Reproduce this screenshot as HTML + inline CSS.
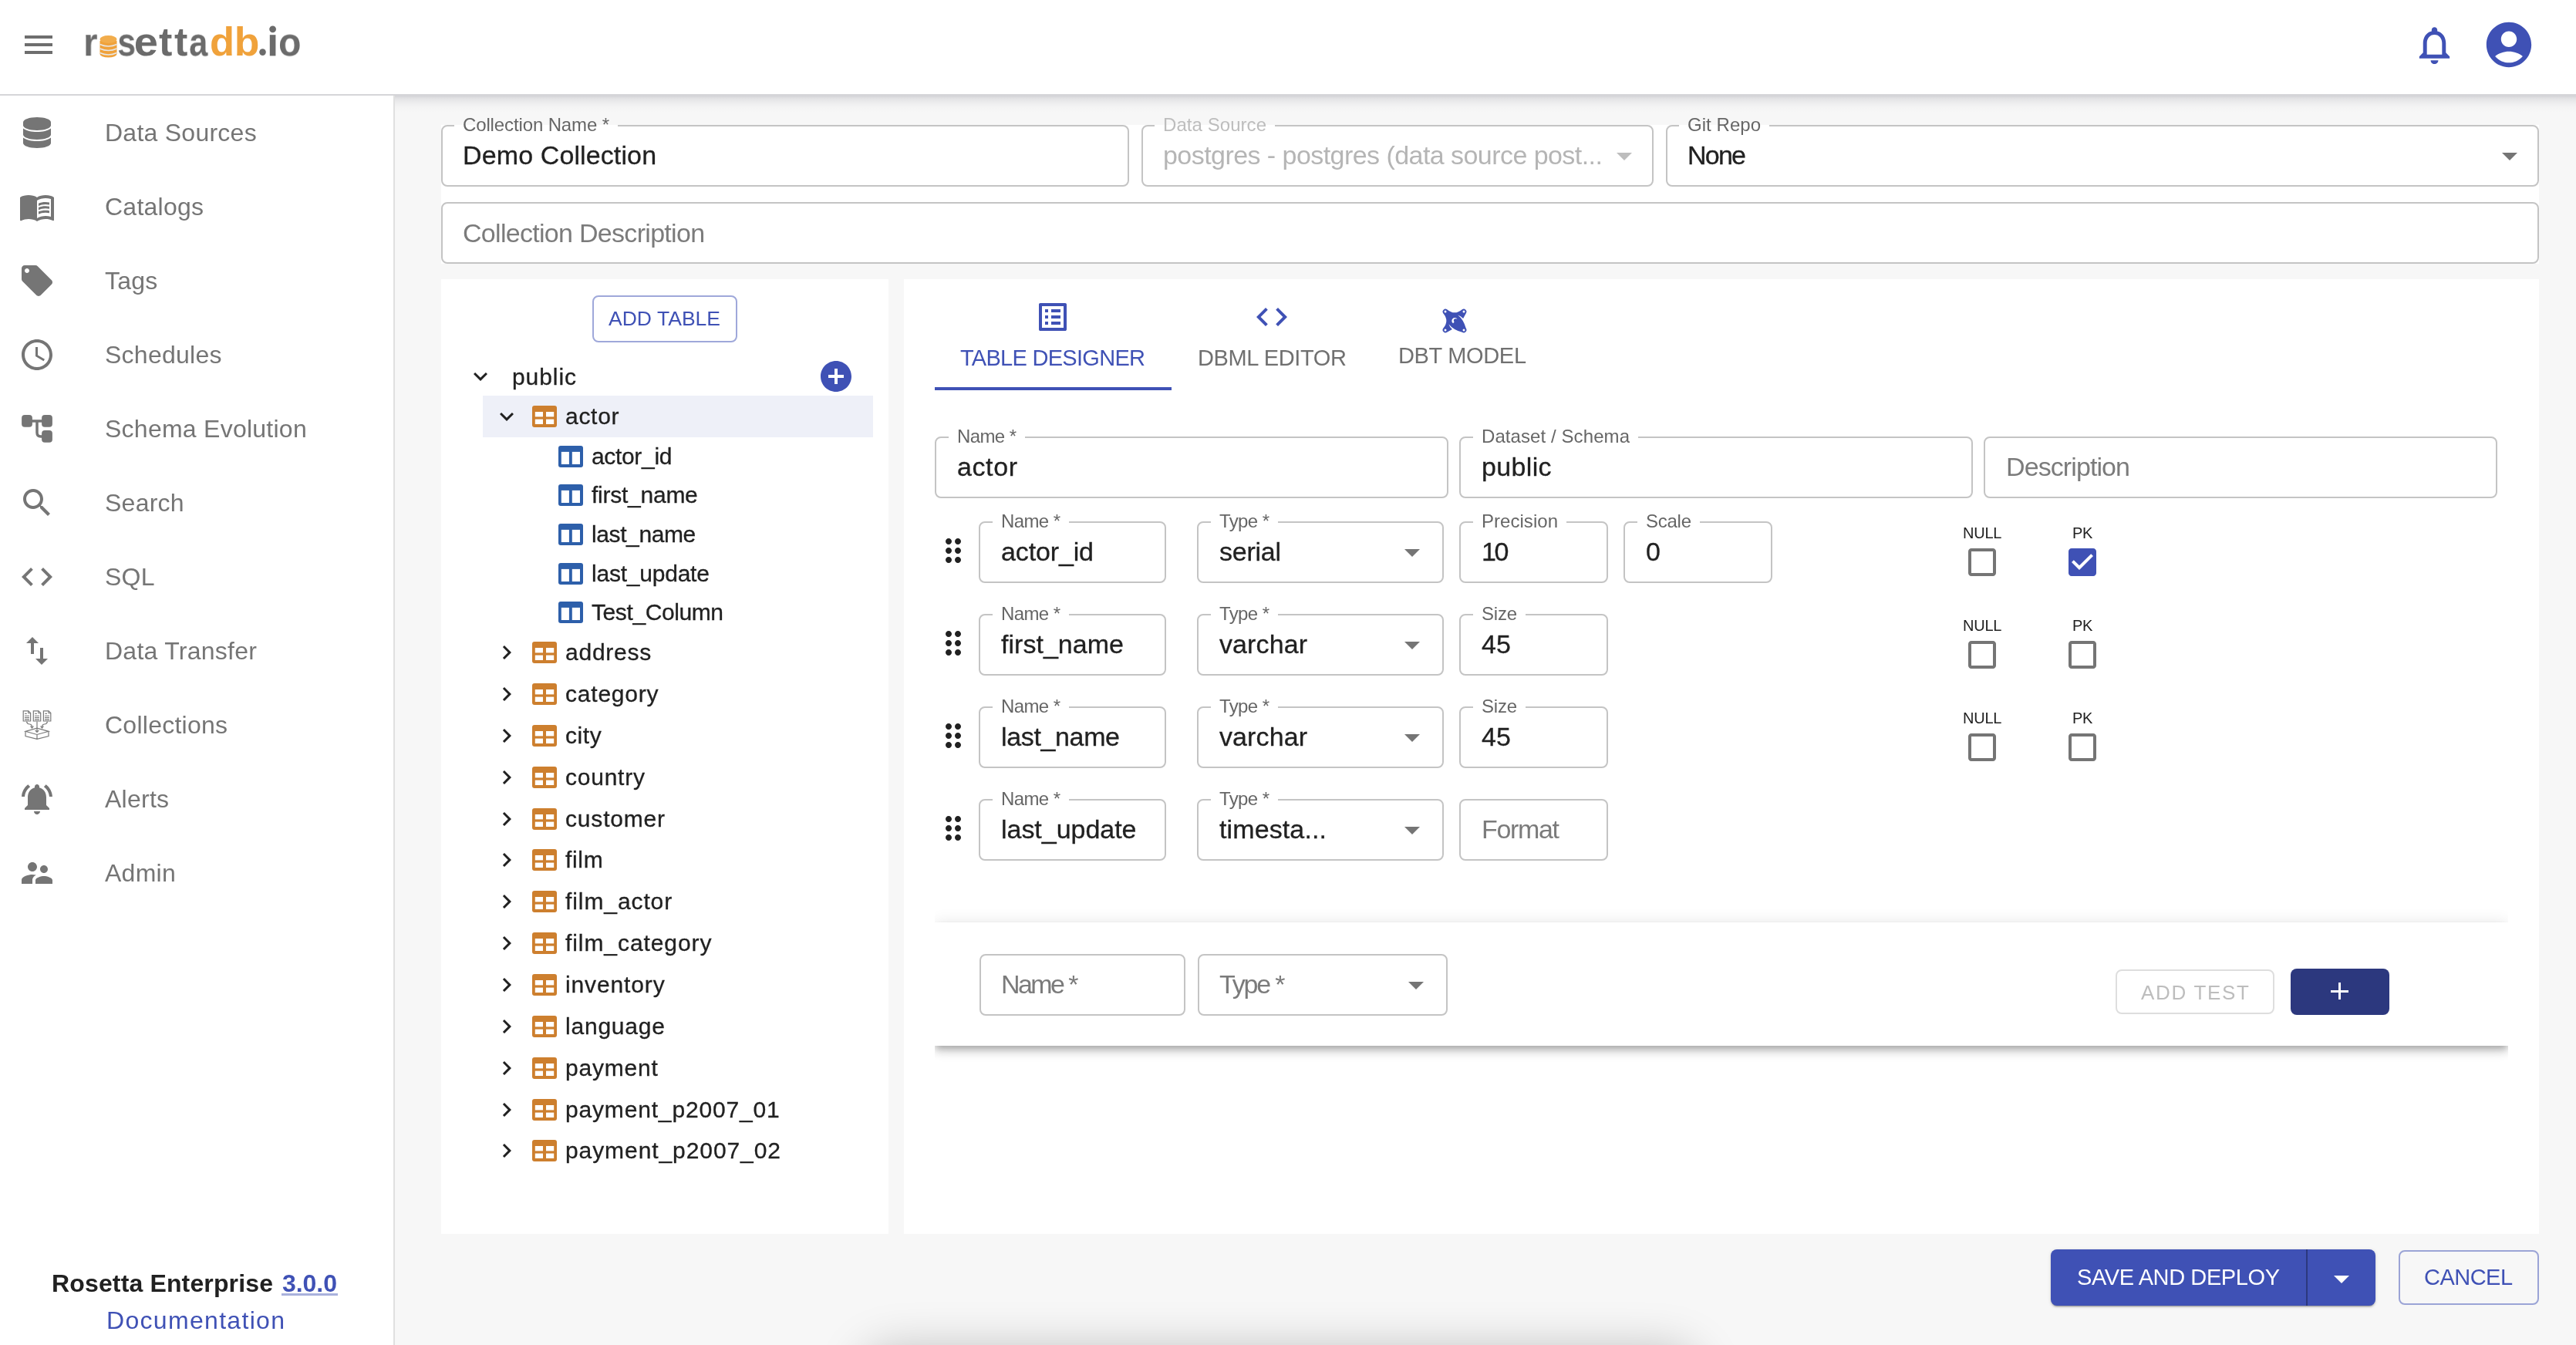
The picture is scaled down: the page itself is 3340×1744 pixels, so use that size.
<!DOCTYPE html><html><head><meta charset="utf-8"><title>Rosetta</title><style>
*{margin:0;padding:0;box-sizing:border-box}
html,body{width:3340px;height:1744px;overflow:hidden;background:#f7f7f7;font-family:"Liberation Sans",sans-serif}
.a{position:absolute}
.t{position:absolute;white-space:pre;will-change:transform}
.s{-webkit-text-stroke:0.3px currentColor}
.fld{border:2px solid #c4c4c4;border-radius:8px;background:#fff}
</style></head><body>
<div class="a" style="left:0px;top:0px;width:3340px;height:122px;background:#fff;"></div>
<div class="a" style="left:0px;top:122px;width:3340px;height:2px;background:#d5d5d8;"></div>
<div class="a" style="left:512px;top:124px;width:2828px;height:22px;background:linear-gradient(#d3d3d7,#e3e3e5 4px,#eeeeef 10px,#f4f4f4 15px,rgba(247,247,247,0));"></div>
<svg class="a" style="left:26px;top:34px;width:48px;height:48px;" viewBox="0 0 24 24"><path fill="#6e6e6e" d="M3 18h18v-2H3v2zm0-5h18v-2H3v2zm0-7v2h18V6H3z"/></svg>
<div class="t" style="left:107.9px;top:30.1px;font-size:50px;line-height:50px;font-weight:bold;color:#6b6b6b;transform:scale(0.94,1.04);transform-origin:3.1px 42.3px">r</div>
<div class="t" style="left:151.9px;top:30.1px;font-size:50px;line-height:50px;font-weight:bold;color:#6b6b6b;transform:scale(0.85,1.04);transform-origin:2.1px 42.3px">s</div>
<div class="t" style="left:174.2px;top:30.1px;font-size:50px;line-height:50px;font-weight:bold;color:#6b6b6b;transform:scale(1.12,1.04);transform-origin:2.1px 42.3px">e</div>
<div class="t" style="left:206.0px;top:30.1px;font-size:50px;line-height:50px;font-weight:bold;color:#6b6b6b;transform:scale(1.04,1.04);transform-origin:0px 42.3px">t</div>
<div class="t" style="left:225.8px;top:30.1px;font-size:50px;line-height:50px;font-weight:bold;color:#6b6b6b;transform:scale(1.04,1.04);transform-origin:0px 42.3px">t</div>
<div class="t" style="left:245.0px;top:30.1px;font-size:50px;line-height:50px;font-weight:bold;color:#6b6b6b;transform:scale(0.87,1.04);transform-origin:1px 42.3px">a</div>
<div class="t" style="left:271.9px;top:30.1px;font-size:50px;line-height:50px;font-weight:bold;color:#f0a23b;transform:scale(1.05,1.04);transform-origin:2.1px 42.3px">d</div>
<div class="t" style="left:303.6px;top:30.1px;font-size:50px;line-height:50px;font-weight:bold;color:#f0a23b;transform:scale(1.07,1.04);transform-origin:3.1px 42.3px">b</div>
<div class="t" style="left:360.9px;top:30.1px;font-size:50px;line-height:50px;font-weight:bold;color:#6b6b6b;transform:scale(0.96,1.04);transform-origin:2.1px 42.3px">o</div>
<svg class="a" style="left:129px;top:45px;width:23px;height:30px" viewBox="0 0 23 30"><ellipse cx="11.5" cy="25" rx="11" ry="4.5" fill="#f0a23b"/><rect x="0.5" y="8" width="22" height="17" fill="#f0a23b"/><ellipse cx="11.5" cy="6" rx="11" ry="5" fill="#f2ad4c"/><path d="M0.5 12.5 Q11.5 17.5 22.5 12.5" stroke="#e8e8e8" stroke-width="1.4" fill="none"/><path d="M0.5 18 Q11.5 23 22.5 18" stroke="#e8e8e8" stroke-width="1.4" fill="none"/><path d="M0.5 23.5 Q11.5 28.5 22.5 23.5" stroke="#e8e8e8" stroke-width="1.4" fill="none"/></svg>
<svg class="a" style="left:330px;top:30px;width:40px;height:50px" viewBox="0 0 40 50"><circle cx="10.5" cy="37.6" r="4.3" fill="#6b6b6b"/><rect x="19.8" y="15.2" width="7.6" height="27.2" fill="#6b6b6b"/><circle cx="23.6" cy="7.8" r="4.4" fill="#6b6b6b"/></svg>
<svg class="a" style="left:3127px;top:29px;width:59px;height:59px;" viewBox="0 0 24 24"><path fill="#3f51b5" d="M12 22c1.1 0 2-.9 2-2h-4c0 1.1.89 2 2 2zm6-6v-5c0-3.07-1.64-5.64-4.5-6.32V4c0-.83-.67-1.5-1.5-1.5s-1.5.67-1.5 1.5v.68C7.63 5.36 6 7.92 6 11v5l-2 2v1h16v-1l-2-2zm-2 1H8v-6c0-2.48 1.51-4.5 4-4.5s4 2.02 4 4.5v6z"/></svg>
<svg class="a" style="left:3218px;top:23px;width:70px;height:70px;" viewBox="0 0 24 24"><path fill="#3f51b5" d="M12 2C6.48 2 2 6.48 2 12s4.48 10 10 10 10-4.48 10-10S17.52 2 12 2zm0 4c1.93 0 3.5 1.57 3.5 3.5S13.93 13 12 13s-3.5-1.57-3.5-3.5S10.07 6 12 6zm0 14c-2.03 0-4.43-.82-6.14-2.88C7.55 15.8 9.68 15 12 15s4.45.8 6.14 2.12C16.43 19.18 14.03 20 12 20z"/></svg>
<div class="a" style="left:0px;top:124px;width:510px;height:1620px;background:#fff;"></div>
<div class="a" style="left:510px;top:124px;width:2px;height:1620px;background:#e0e0e0;"></div>
<div class="t" style="left:136.00px;top:155.91px;font-size:32px;line-height:32px;color:#757575;letter-spacing:0.250px;">Data Sources</div>
<div class="t" style="left:136.00px;top:251.91px;font-size:32px;line-height:32px;color:#757575;letter-spacing:0.250px;">Catalogs</div>
<svg class="a" style="left:24px;top:244px;width:48px;height:48px;" viewBox="0 0 24 24"><path fill="#757575" d="M21 5c-1.11-.35-2.33-.5-3.5-.5-1.95 0-4.05.4-5.5 1.5-1.45-1.1-3.55-1.5-5.5-1.5S2.45 4.9 1 6v14.65c0 .25.25.5.5.5.1 0 .15-.05.25-.05C3.1 20.45 5.05 20 6.5 20c1.95 0 4.05.4 5.5 1.5 1.35-.85 3.8-1.5 5.5-1.5 1.65 0 3.35.3 4.75 1.05.1.05.15.05.25.05.25 0 .5-.25.5-.5V6c-.6-.45-1.25-.75-2-1zm0 13.5c-1.1-.35-2.3-.5-3.5-.5-1.7 0-4.15.65-5.5 1.5V8c1.35-.85 3.8-1.5 5.5-1.5 1.2 0 2.4.15 3.5.5v11.5zM17.5 10.5c.88 0 1.73.09 2.5.26V9.24c-.79-.15-1.64-.24-2.5-.24-1.7 0-3.24.29-4.5.83v1.66c1.13-.64 2.7-.99 4.5-.99zM13 12.49v1.66c1.13-.64 2.7-.99 4.5-.99.88 0 1.73.09 2.5.26V11.9c-.79-.15-1.64-.24-2.5-.24-1.7 0-3.24.3-4.5.83zm4.5 1.84c-1.7 0-3.24.29-4.5.83v1.66c1.13-.64 2.7-.99 4.5-.99.88 0 1.73.09 2.5.26v-1.52c-.79-.16-1.64-.24-2.5-.24z"/></svg>
<div class="t" style="left:136.00px;top:347.91px;font-size:32px;line-height:32px;color:#757575;letter-spacing:0.250px;">Tags</div>
<svg class="a" style="left:24px;top:340px;width:48px;height:48px;" viewBox="0 0 24 24"><path fill="#757575" d="M21.41 11.58l-9-9C12.05 2.22 11.55 2 11 2H4c-1.1 0-2 .9-2 2v7c0 .55.22 1.05.59 1.42l9 9c.36.36.86.58 1.41.58.55 0 1.05-.22 1.41-.59l7-7c.37-.36.59-.86.59-1.41 0-.55-.23-1.06-.59-1.42zM5.5 7C4.67 7 4 6.33 4 5.5S4.67 4 5.5 4 7 4.67 7 5.5 6.33 7 5.5 7z"/></svg>
<div class="t" style="left:136.00px;top:443.91px;font-size:32px;line-height:32px;color:#757575;letter-spacing:0.250px;">Schedules</div>
<svg class="a" style="left:24px;top:436px;width:48px;height:48px;" viewBox="0 0 24 24"><path fill="#757575" d="M11.99 2C6.47 2 2 6.48 2 12s4.47 10 9.99 10C17.52 22 22 17.52 22 12S17.52 2 11.99 2zM12 20c-4.42 0-8-3.58-8-8s3.58-8 8-8 8 3.58 8 8-3.58 8-8 8zm.5-13H11v6l5.25 3.15.75-1.23-4.5-2.67z"/></svg>
<div class="t" style="left:136.00px;top:539.91px;font-size:32px;line-height:32px;color:#757575;letter-spacing:0.250px;">Schema Evolution</div>
<div class="t" style="left:136.00px;top:635.91px;font-size:32px;line-height:32px;color:#757575;letter-spacing:0.250px;">Search</div>
<svg class="a" style="left:24px;top:628px;width:48px;height:48px;" viewBox="0 0 24 24"><path fill="#757575" d="M15.5 14h-.79l-.28-.27C15.41 12.59 16 11.11 16 9.5 16 5.91 13.09 3 9.5 3S3 5.91 3 9.5 5.91 16 9.5 16c1.61 0 3.09-.59 4.23-1.57l.27.28v.79l5 4.99L20.49 19l-4.99-5zm-6 0C7.01 14 5 11.99 5 9.5S7.01 5 9.5 5 14 7.01 14 9.5 11.99 14 9.5 14z"/></svg>
<div class="t" style="left:136.00px;top:731.91px;font-size:32px;line-height:32px;color:#757575;letter-spacing:0.250px;">SQL</div>
<svg class="a" style="left:24px;top:724px;width:48px;height:48px;" viewBox="0 0 24 24"><path fill="#757575" d="M9.4 16.6L4.8 12l4.6-4.6L8 6l-6 6 6 6 1.4-1.4zm5.2 0l4.6-4.6-4.6-4.6L16 6l6 6-6 6-1.4-1.4z"/></svg>
<div class="t" style="left:136.00px;top:827.91px;font-size:32px;line-height:32px;color:#757575;letter-spacing:0.250px;">Data Transfer</div>
<svg class="a" style="left:24px;top:820px;width:48px;height:48px;" viewBox="0 0 24 24"><path fill="#757575" d="M16 17.01V10h-2v7.01h-3L15 21l4-3.99h-3zM9 3L5 6.99h3V14h2V6.99h3L9 3z"/></svg>
<div class="t" style="left:136.00px;top:923.91px;font-size:32px;line-height:32px;color:#757575;letter-spacing:0.250px;">Collections</div>
<div class="t" style="left:136.00px;top:1019.91px;font-size:32px;line-height:32px;color:#757575;letter-spacing:0.250px;">Alerts</div>
<svg class="a" style="left:24px;top:1012px;width:48px;height:48px;" viewBox="0 0 24 24"><path fill="#757575" d="M7.58 4.08L6.15 2.65C3.75 4.48 2.17 7.3 2.03 10.5h2c.15-2.65 1.51-4.97 3.55-6.42zm12.39 6.42h2c-.15-3.2-1.73-6.02-4.12-7.85l-1.42 1.43c2.02 1.45 3.39 3.77 3.54 6.42zM18 11c0-3.07-1.64-5.64-4.5-6.32V4c0-.83-.67-1.5-1.5-1.5s-1.5.67-1.5 1.5v.68C7.63 5.36 6 7.92 6 11v5l-2 2v1h16v-1l-2-2v-5zm-6 11c.14 0 .27-.01.4-.04.65-.14 1.18-.58 1.44-1.18.1-.24.15-.5.15-.78h-4c.01 1.1.9 2 2.01 2z"/></svg>
<div class="t" style="left:136.00px;top:1115.91px;font-size:32px;line-height:32px;color:#757575;letter-spacing:0.250px;">Admin</div>
<svg class="a" style="left:24px;top:1108px;width:48px;height:48px;" viewBox="0 0 24 24"><path fill="#757575" d="M16.5 12c1.38 0 2.49-1.12 2.49-2.5S17.88 7 16.5 7C15.12 7 14 8.12 14 9.5s1.12 2.5 2.5 2.5zM9 11c1.66 0 2.99-1.34 2.99-3S10.66 5 9 5C7.34 5 6 6.34 6 8s1.34 3 3 3zm7.5 3c-1.83 0-5.5.92-5.5 2.75V19h11v-2.25c0-1.83-3.67-2.75-5.5-2.75zM9 13c-2.33 0-7 1.17-7 3.5V19h7v-2.25c0-.85.33-2.34 2.37-3.47C10.5 13.1 9.66 13 9 13z"/></svg>
<svg class="a" style="left:30px;top:152px;width:36px;height:40px" viewBox="0 0 36 40"><path fill="#757575" d="M0 6.5C0 2.9 8 0 18 0s18 2.9 18 6.5v4C36 14.1 28 17 18 17S0 14.1 0 10.5z"/><path fill="#757575" d="M0 14.5C4 17.6 11 19 18 19s14-1.4 18-4.5v8C36 26.1 28 29 18 29S0 26.1 0 22.5z"/><path fill="#757575" d="M0 26.5C4 29.6 11 31 18 31s14-1.4 18-4.5v7C36 37.1 28 40 18 40S0 37.1 0 33.5z"/></svg>
<svg class="a" style="left:20px;top:530px;width:56px;height:56px" viewBox="0 0 56 56"><rect x="8.1" y="8.1" width="13.8" height="15.6" rx="4" fill="#757575"/><rect x="34.1" y="8.1" width="13.8" height="15.6" rx="4" fill="#757575"/><rect x="34.1" y="28.1" width="13.8" height="15.6" rx="4" fill="#757575"/><rect x="21" y="14.2" width="14" height="3.5" fill="#757575"/><path d="M28 16V31q0 5 5 5H35" stroke="#757575" stroke-width="3.5" fill="none"/></svg>
<svg class="a" style="left:20px;top:910px;width:56px;height:56px" viewBox="0 0 56 56" fill="none" stroke="#7a7a7a" stroke-width="1.2"><path d="M10.2 11.8h6.6l2.8 2.8v10.4h-9.4z"/><path d="M23.3 11.8h6.6l2.8 2.8v10.4h-9.4z"/><path d="M36.4 11.8h6.6l2.8 2.8v10.4h-9.4z"/><path d="M16.6 11.8v3h3M29.7 11.8v3h3M42.8 11.8v3h3" stroke-width="1"/><path d="M12.2 15.4h2.5M12 18.3h6M12 20.6h6M12 23.1h6M25.3 15.4h2.5M25 18.3h6M25 20.6h6M25 23.1h6M38.4 15.4h2.5M38 18.3h6M38 20.6h6M38 23.1h6" stroke-width="1.1"/><path d="M14.5 25.6q0.5 3 4 3.4q3.5 0.4 3 4.8M19.5 31.5l2 2.5 2-2.5"/><path d="M28 25.6V39M25.8 37l2.2 2.4 2.2-2.4"/><path d="M41.5 25.6q-0.5 3-4 3.4q-3.5 0.4-3 4.8M32.5 31.5l2 2.5 2-2.5"/><path d="M13 38.3l15-4.1 15 4.1-15 4.2z"/><path d="M13 38.3v6.2l15 3.8 15-3.8v-6.2M28 42.5v5.8"/></svg>
<div class="t" style="left:67.00px;top:1647.91px;font-size:32px;line-height:32px;color:#212121;font-weight:bold;letter-spacing:0.145px;">Rosetta Enterprise</div>
<div class="t" style="left:366.00px;top:1647.91px;font-size:32px;line-height:32px;color:#3f51b5;font-weight:bold;letter-spacing:-0.043px;">3.0.0</div>
<div class="a" style="left:365px;top:1677px;width:73px;height:3px;background:#a9b1dc;"></div>
<div class="t" style="left:137.50px;top:1695.91px;font-size:32px;line-height:32px;color:#3f51b5;letter-spacing:1.314px;">Documentation</div>
<div class="a" style="left:572px;top:162px;width:2720px;height:180px;background:#fff;"></div>
<div class="a fld" style="left:572px;top:162px;width:892px;height:80px;"></div>
<div class="a" style="left:588.5px;top:162px;width:212.0px;height:3px;background:#fff"></div>
<div class="t" style="left:599.50px;top:149.98px;font-size:24px;line-height:24px;color:#666666;letter-spacing:-0.129px;">Collection Name *</div>
<div class="t s" style="left:599.50px;top:184.22px;font-size:34px;line-height:34px;color:#212121;letter-spacing:0.114px;">Demo Collection</div>
<div class="a fld" style="left:1480px;top:162px;width:664px;height:80px;"></div>
<div class="a" style="left:1496.5px;top:162px;width:156.0px;height:3px;background:#fff"></div>
<div class="t" style="left:1507.50px;top:149.98px;font-size:24px;line-height:24px;color:#bdbdbd;letter-spacing:0.059px;">Data Source</div>
<div class="t" style="left:1507.50px;top:184.22px;font-size:34px;line-height:34px;color:#b5b5b5;letter-spacing:-0.553px;">postgres - postgres (data source post...</div>
<svg class="a" style="left:2082px;top:178px;width:48px;height:48px;" viewBox="0 0 24 24"><path fill="#bdbdbd" d="M7 10l5 5 5-5z"/></svg>
<div class="a fld" style="left:2160px;top:162px;width:1132px;height:80px;"></div>
<div class="a" style="left:2176.5px;top:162px;width:117.0px;height:3px;background:#fff"></div>
<div class="t" style="left:2187.50px;top:149.98px;font-size:24px;line-height:24px;color:#666666;letter-spacing:0.042px;">Git Repo</div>
<div class="t s" style="left:2187.50px;top:184.22px;font-size:34px;line-height:34px;color:#212121;letter-spacing:-1.755px;">None</div>
<svg class="a" style="left:3230px;top:178px;width:48px;height:48px;" viewBox="0 0 24 24"><path fill="#757575" d="M7 10l5 5 5-5z"/></svg>
<div class="a fld" style="left:572px;top:262px;width:2720px;height:80px;"></div>
<div class="t" style="left:599.50px;top:285.22px;font-size:34px;line-height:34px;color:#7b7b7b;letter-spacing:-0.703px;">Collection Description</div>
<div class="a" style="left:572px;top:362px;width:580px;height:1238px;background:#fff;"></div>
<div class="a" style="left:768px;top:383px;width:188px;height:61px;border:2px solid rgba(63,81,181,0.5);border-radius:8px"></div>
<div class="t" style="left:788.80px;top:399.57px;font-size:26.5px;line-height:26.5px;color:#3f51b5;letter-spacing:0.025px;">ADD TABLE</div>
<svg class="a" style="left:605px;top:470px;width:36px;height:36px;" viewBox="0 0 24 24"><path fill="#212121" d="M16.59 8.59L12 13.17 7.41 8.59 6 10l6 6 6-6z"/></svg>
<div class="t s" style="left:664.00px;top:473.61px;font-size:30px;line-height:30px;color:#212121;letter-spacing:0.919px;">public</div>
<svg class="a" style="left:1060px;top:464px;width:48px;height:48px;" viewBox="0 0 24 24"><path fill="#3f51b5" d="M12 2C6.48 2 2 6.48 2 12s4.48 10 10 10 10-4.48 10-10S17.52 2 12 2zm5 11h-4v4h-2v-4H7v-2h4V7h2v4h4v2z"/></svg>
<div class="a" style="left:626px;top:513px;width:506px;height:54px;background:#eef0f8;"></div>
<svg class="a" style="left:639px;top:522px;width:36px;height:36px;" viewBox="0 0 24 24"><path fill="#212121" d="M16.59 8.59L12 13.17 7.41 8.59 6 10l6 6 6-6z"/></svg>
<svg class="a" style="left:690px;top:526px;width:32px;height:28px" viewBox="0 0 32 28"><rect x="0" y="0" width="32" height="28" rx="3" fill="#cd7f2e"/><rect x="3.8" y="8" width="10.2" height="6.4" fill="#fff"/><rect x="18" y="8" width="10.2" height="6.4" fill="#fff"/><rect x="3.8" y="17.6" width="10.2" height="6.4" fill="#fff"/><rect x="18" y="17.6" width="10.2" height="6.4" fill="#fff"/></svg>
<div class="t s" style="left:733.00px;top:524.61px;font-size:30px;line-height:30px;color:#212121;letter-spacing:0.703px;">actor</div>
<svg class="a" style="left:724px;top:578px;width:32px;height:28px" viewBox="0 0 32 28"><rect x="0" y="0" width="32" height="28" rx="3" fill="#2d5faa"/><rect x="3.8" y="7.9" width="10.1" height="16.1" fill="#fff"/><rect x="17.8" y="7.9" width="10.2" height="16.1" fill="#fff"/></svg>
<div class="t s" style="left:767.00px;top:576.61px;font-size:30px;line-height:30px;color:#212121;letter-spacing:-0.333px;">actor_id</div>
<svg class="a" style="left:724px;top:628px;width:32px;height:28px" viewBox="0 0 32 28"><rect x="0" y="0" width="32" height="28" rx="3" fill="#2d5faa"/><rect x="3.8" y="7.9" width="10.1" height="16.1" fill="#fff"/><rect x="17.8" y="7.9" width="10.2" height="16.1" fill="#fff"/></svg>
<div class="t s" style="left:767.00px;top:626.61px;font-size:30px;line-height:30px;color:#212121;letter-spacing:-0.250px;">first_name</div>
<svg class="a" style="left:724px;top:679px;width:32px;height:28px" viewBox="0 0 32 28"><rect x="0" y="0" width="32" height="28" rx="3" fill="#2d5faa"/><rect x="3.8" y="7.9" width="10.1" height="16.1" fill="#fff"/><rect x="17.8" y="7.9" width="10.2" height="16.1" fill="#fff"/></svg>
<div class="t s" style="left:767.00px;top:677.61px;font-size:30px;line-height:30px;color:#212121;letter-spacing:-0.390px;">last_name</div>
<svg class="a" style="left:724px;top:730px;width:32px;height:28px" viewBox="0 0 32 28"><rect x="0" y="0" width="32" height="28" rx="3" fill="#2d5faa"/><rect x="3.8" y="7.9" width="10.1" height="16.1" fill="#fff"/><rect x="17.8" y="7.9" width="10.2" height="16.1" fill="#fff"/></svg>
<div class="t s" style="left:767.00px;top:728.61px;font-size:30px;line-height:30px;color:#212121;letter-spacing:-0.224px;">last_update</div>
<svg class="a" style="left:724px;top:780px;width:32px;height:28px" viewBox="0 0 32 28"><rect x="0" y="0" width="32" height="28" rx="3" fill="#2d5faa"/><rect x="3.8" y="7.9" width="10.1" height="16.1" fill="#fff"/><rect x="17.8" y="7.9" width="10.2" height="16.1" fill="#fff"/></svg>
<div class="t s" style="left:767.00px;top:778.61px;font-size:30px;line-height:30px;color:#212121;letter-spacing:-0.409px;">Test_Column</div>
<svg class="a" style="left:639px;top:828px;width:36px;height:36px;" viewBox="0 0 24 24"><path fill="#212121" d="M10 6L8.59 7.41 13.17 12l-4.58 4.59L10 18l6-6z"/></svg>
<svg class="a" style="left:690px;top:832px;width:32px;height:28px" viewBox="0 0 32 28"><rect x="0" y="0" width="32" height="28" rx="3" fill="#cd7f2e"/><rect x="3.8" y="8" width="10.2" height="6.4" fill="#fff"/><rect x="18" y="8" width="10.2" height="6.4" fill="#fff"/><rect x="3.8" y="17.6" width="10.2" height="6.4" fill="#fff"/><rect x="18" y="17.6" width="10.2" height="6.4" fill="#fff"/></svg>
<div class="t s" style="left:733.00px;top:830.61px;font-size:30px;line-height:30px;color:#212121;letter-spacing:0.761px;">address</div>
<svg class="a" style="left:639px;top:882px;width:36px;height:36px;" viewBox="0 0 24 24"><path fill="#212121" d="M10 6L8.59 7.41 13.17 12l-4.58 4.59L10 18l6-6z"/></svg>
<svg class="a" style="left:690px;top:886px;width:32px;height:28px" viewBox="0 0 32 28"><rect x="0" y="0" width="32" height="28" rx="3" fill="#cd7f2e"/><rect x="3.8" y="8" width="10.2" height="6.4" fill="#fff"/><rect x="18" y="8" width="10.2" height="6.4" fill="#fff"/><rect x="3.8" y="17.6" width="10.2" height="6.4" fill="#fff"/><rect x="18" y="17.6" width="10.2" height="6.4" fill="#fff"/></svg>
<div class="t s" style="left:733.00px;top:884.61px;font-size:30px;line-height:30px;color:#212121;letter-spacing:0.791px;">category</div>
<svg class="a" style="left:639px;top:936px;width:36px;height:36px;" viewBox="0 0 24 24"><path fill="#212121" d="M10 6L8.59 7.41 13.17 12l-4.58 4.59L10 18l6-6z"/></svg>
<svg class="a" style="left:690px;top:940px;width:32px;height:28px" viewBox="0 0 32 28"><rect x="0" y="0" width="32" height="28" rx="3" fill="#cd7f2e"/><rect x="3.8" y="8" width="10.2" height="6.4" fill="#fff"/><rect x="18" y="8" width="10.2" height="6.4" fill="#fff"/><rect x="3.8" y="17.6" width="10.2" height="6.4" fill="#fff"/><rect x="18" y="17.6" width="10.2" height="6.4" fill="#fff"/></svg>
<div class="t s" style="left:733.00px;top:938.61px;font-size:30px;line-height:30px;color:#212121;letter-spacing:0.567px;">city</div>
<svg class="a" style="left:639px;top:990px;width:36px;height:36px;" viewBox="0 0 24 24"><path fill="#212121" d="M10 6L8.59 7.41 13.17 12l-4.58 4.59L10 18l6-6z"/></svg>
<svg class="a" style="left:690px;top:994px;width:32px;height:28px" viewBox="0 0 32 28"><rect x="0" y="0" width="32" height="28" rx="3" fill="#cd7f2e"/><rect x="3.8" y="8" width="10.2" height="6.4" fill="#fff"/><rect x="18" y="8" width="10.2" height="6.4" fill="#fff"/><rect x="3.8" y="17.6" width="10.2" height="6.4" fill="#fff"/><rect x="18" y="17.6" width="10.2" height="6.4" fill="#fff"/></svg>
<div class="t s" style="left:733.00px;top:992.61px;font-size:30px;line-height:30px;color:#212121;letter-spacing:0.754px;">country</div>
<svg class="a" style="left:639px;top:1044px;width:36px;height:36px;" viewBox="0 0 24 24"><path fill="#212121" d="M10 6L8.59 7.41 13.17 12l-4.58 4.59L10 18l6-6z"/></svg>
<svg class="a" style="left:690px;top:1048px;width:32px;height:28px" viewBox="0 0 32 28"><rect x="0" y="0" width="32" height="28" rx="3" fill="#cd7f2e"/><rect x="3.8" y="8" width="10.2" height="6.4" fill="#fff"/><rect x="18" y="8" width="10.2" height="6.4" fill="#fff"/><rect x="3.8" y="17.6" width="10.2" height="6.4" fill="#fff"/><rect x="18" y="17.6" width="10.2" height="6.4" fill="#fff"/></svg>
<div class="t s" style="left:733.00px;top:1046.61px;font-size:30px;line-height:30px;color:#212121;letter-spacing:0.820px;">customer</div>
<svg class="a" style="left:639px;top:1097px;width:36px;height:36px;" viewBox="0 0 24 24"><path fill="#212121" d="M10 6L8.59 7.41 13.17 12l-4.58 4.59L10 18l6-6z"/></svg>
<svg class="a" style="left:690px;top:1101px;width:32px;height:28px" viewBox="0 0 32 28"><rect x="0" y="0" width="32" height="28" rx="3" fill="#cd7f2e"/><rect x="3.8" y="8" width="10.2" height="6.4" fill="#fff"/><rect x="18" y="8" width="10.2" height="6.4" fill="#fff"/><rect x="3.8" y="17.6" width="10.2" height="6.4" fill="#fff"/><rect x="18" y="17.6" width="10.2" height="6.4" fill="#fff"/></svg>
<div class="t s" style="left:733.00px;top:1099.61px;font-size:30px;line-height:30px;color:#212121;letter-spacing:0.681px;">film</div>
<svg class="a" style="left:639px;top:1151px;width:36px;height:36px;" viewBox="0 0 24 24"><path fill="#212121" d="M10 6L8.59 7.41 13.17 12l-4.58 4.59L10 18l6-6z"/></svg>
<svg class="a" style="left:690px;top:1155px;width:32px;height:28px" viewBox="0 0 32 28"><rect x="0" y="0" width="32" height="28" rx="3" fill="#cd7f2e"/><rect x="3.8" y="8" width="10.2" height="6.4" fill="#fff"/><rect x="18" y="8" width="10.2" height="6.4" fill="#fff"/><rect x="3.8" y="17.6" width="10.2" height="6.4" fill="#fff"/><rect x="18" y="17.6" width="10.2" height="6.4" fill="#fff"/></svg>
<div class="t s" style="left:733.00px;top:1153.61px;font-size:30px;line-height:30px;color:#212121;letter-spacing:0.908px;">film_actor</div>
<svg class="a" style="left:639px;top:1205px;width:36px;height:36px;" viewBox="0 0 24 24"><path fill="#212121" d="M10 6L8.59 7.41 13.17 12l-4.58 4.59L10 18l6-6z"/></svg>
<svg class="a" style="left:690px;top:1209px;width:32px;height:28px" viewBox="0 0 32 28"><rect x="0" y="0" width="32" height="28" rx="3" fill="#cd7f2e"/><rect x="3.8" y="8" width="10.2" height="6.4" fill="#fff"/><rect x="18" y="8" width="10.2" height="6.4" fill="#fff"/><rect x="3.8" y="17.6" width="10.2" height="6.4" fill="#fff"/><rect x="18" y="17.6" width="10.2" height="6.4" fill="#fff"/></svg>
<div class="t s" style="left:733.00px;top:1207.61px;font-size:30px;line-height:30px;color:#212121;letter-spacing:0.924px;">film_category</div>
<svg class="a" style="left:639px;top:1259px;width:36px;height:36px;" viewBox="0 0 24 24"><path fill="#212121" d="M10 6L8.59 7.41 13.17 12l-4.58 4.59L10 18l6-6z"/></svg>
<svg class="a" style="left:690px;top:1263px;width:32px;height:28px" viewBox="0 0 32 28"><rect x="0" y="0" width="32" height="28" rx="3" fill="#cd7f2e"/><rect x="3.8" y="8" width="10.2" height="6.4" fill="#fff"/><rect x="18" y="8" width="10.2" height="6.4" fill="#fff"/><rect x="3.8" y="17.6" width="10.2" height="6.4" fill="#fff"/><rect x="18" y="17.6" width="10.2" height="6.4" fill="#fff"/></svg>
<div class="t s" style="left:733.00px;top:1261.61px;font-size:30px;line-height:30px;color:#212121;letter-spacing:0.871px;">inventory</div>
<svg class="a" style="left:639px;top:1313px;width:36px;height:36px;" viewBox="0 0 24 24"><path fill="#212121" d="M10 6L8.59 7.41 13.17 12l-4.58 4.59L10 18l6-6z"/></svg>
<svg class="a" style="left:690px;top:1317px;width:32px;height:28px" viewBox="0 0 32 28"><rect x="0" y="0" width="32" height="28" rx="3" fill="#cd7f2e"/><rect x="3.8" y="8" width="10.2" height="6.4" fill="#fff"/><rect x="18" y="8" width="10.2" height="6.4" fill="#fff"/><rect x="3.8" y="17.6" width="10.2" height="6.4" fill="#fff"/><rect x="18" y="17.6" width="10.2" height="6.4" fill="#fff"/></svg>
<div class="t s" style="left:733.00px;top:1315.61px;font-size:30px;line-height:30px;color:#212121;letter-spacing:0.788px;">language</div>
<svg class="a" style="left:639px;top:1367px;width:36px;height:36px;" viewBox="0 0 24 24"><path fill="#212121" d="M10 6L8.59 7.41 13.17 12l-4.58 4.59L10 18l6-6z"/></svg>
<svg class="a" style="left:690px;top:1371px;width:32px;height:28px" viewBox="0 0 32 28"><rect x="0" y="0" width="32" height="28" rx="3" fill="#cd7f2e"/><rect x="3.8" y="8" width="10.2" height="6.4" fill="#fff"/><rect x="18" y="8" width="10.2" height="6.4" fill="#fff"/><rect x="3.8" y="17.6" width="10.2" height="6.4" fill="#fff"/><rect x="18" y="17.6" width="10.2" height="6.4" fill="#fff"/></svg>
<div class="t s" style="left:733.00px;top:1369.61px;font-size:30px;line-height:30px;color:#212121;letter-spacing:0.806px;">payment</div>
<svg class="a" style="left:639px;top:1421px;width:36px;height:36px;" viewBox="0 0 24 24"><path fill="#212121" d="M10 6L8.59 7.41 13.17 12l-4.58 4.59L10 18l6-6z"/></svg>
<svg class="a" style="left:690px;top:1425px;width:32px;height:28px" viewBox="0 0 32 28"><rect x="0" y="0" width="32" height="28" rx="3" fill="#cd7f2e"/><rect x="3.8" y="8" width="10.2" height="6.4" fill="#fff"/><rect x="18" y="8" width="10.2" height="6.4" fill="#fff"/><rect x="3.8" y="17.6" width="10.2" height="6.4" fill="#fff"/><rect x="18" y="17.6" width="10.2" height="6.4" fill="#fff"/></svg>
<div class="t s" style="left:733.00px;top:1423.61px;font-size:30px;line-height:30px;color:#212121;letter-spacing:0.830px;">payment_p2007_01</div>
<svg class="a" style="left:639px;top:1474px;width:36px;height:36px;" viewBox="0 0 24 24"><path fill="#212121" d="M10 6L8.59 7.41 13.17 12l-4.58 4.59L10 18l6-6z"/></svg>
<svg class="a" style="left:690px;top:1478px;width:32px;height:28px" viewBox="0 0 32 28"><rect x="0" y="0" width="32" height="28" rx="3" fill="#cd7f2e"/><rect x="3.8" y="8" width="10.2" height="6.4" fill="#fff"/><rect x="18" y="8" width="10.2" height="6.4" fill="#fff"/><rect x="3.8" y="17.6" width="10.2" height="6.4" fill="#fff"/><rect x="18" y="17.6" width="10.2" height="6.4" fill="#fff"/></svg>
<div class="t s" style="left:733.00px;top:1476.61px;font-size:30px;line-height:30px;color:#212121;letter-spacing:0.917px;">payment_p2007_02</div>
<div class="a" style="left:1172px;top:362px;width:2120px;height:1238px;background:#fff;"></div>
<svg class="a" style="left:1341px;top:387px;width:48px;height:48px;" viewBox="0 0 24 24"><path fill="#3f51b5" d="M19 5v14H5V5h14m1.1-2H3.9c-.5 0-.9.4-.9.9v16.2c0 .4.4.9.9.9h16.2c.4 0 .9-.5.9-.9V3.9c0-.5-.5-.9-.9-.9zM11 7h6v2h-6V7zm0 4h6v2h-6v-2zm0 4h6v2h-6zM7 7h2v2H7zm0 4h2v2H7zm0 4h2v2H7z"/></svg>
<div class="t" style="left:1245.00px;top:450.45px;font-size:29px;line-height:29px;color:#3f51b5;letter-spacing:-0.712px;">TABLE DESIGNER</div>
<div class="a" style="left:1212px;top:502px;width:307px;height:4px;background:#3f51b5;"></div>
<svg class="a" style="left:1625px;top:387px;width:48px;height:48px;" viewBox="0 0 24 24"><path fill="#3f51b5" d="M9.4 16.6L4.8 12l4.6-4.6L8 6l-6 6 6 6 1.4-1.4zm5.2 0l4.6-4.6-4.6-4.6L16 6l6 6-6 6-1.4-1.4z"/></svg>
<div class="t" style="left:1552.50px;top:450.45px;font-size:29px;line-height:29px;color:#707070;letter-spacing:-0.358px;">DBML EDITOR</div>
<svg class="a" style="left:1870px;top:400px;width:32px;height:32px" viewBox="0 0 32 32"><path fill="#3f51b5" d="M1.2 6.2A3.6 3.6 0 0 1 6.2 1.2Q16 9.5 25.8 1.2A3.6 3.6 0 0 1 30.8 6.2L27.1 12.9Q24 9.6 20.2 8.4Q27.5 14 30.8 25.8A3.6 3.6 0 0 1 25.8 30.8Q14 27.5 8.4 20.2Q9.6 24 12.9 27.1L6.2 30.8A3.6 3.6 0 0 1 1.2 25.8Q9.5 16 1.2 6.2z"/><circle cx="4" cy="4" r="1.5" fill="#fff"/><circle cx="28" cy="4" r="1.5" fill="#fff"/><circle cx="4" cy="28" r="1.5" fill="#fff"/><circle cx="28" cy="28" r="1.5" fill="#fff"/><path fill="#fff" d="M19.6 13.6A4 4 0 1 0 14.2 19.3L15.6 17.3A2.3 2.3 0 0 1 17.6 13.3z"/></svg>
<div class="t" style="left:1813.00px;top:447.45px;font-size:29px;line-height:29px;color:#707070;letter-spacing:-0.332px;">DBT MODEL</div>
<div class="a fld" style="left:1212px;top:566px;width:666px;height:80px;"></div>
<div class="a" style="left:1229.5px;top:566px;width:99.0px;height:3px;background:#fff"></div>
<div class="t" style="left:1240.50px;top:553.98px;font-size:24px;line-height:24px;color:#666666;letter-spacing:-0.606px;">Name *</div>
<div class="t s" style="left:1240.50px;top:588.22px;font-size:34px;line-height:34px;color:#212121;letter-spacing:0.602px;">actor</div>
<div class="a fld" style="left:1892px;top:566px;width:666px;height:80px;"></div>
<div class="a" style="left:1909.5px;top:566px;width:214.0px;height:3px;background:#fff"></div>
<div class="t" style="left:1920.50px;top:553.98px;font-size:24px;line-height:24px;color:#666666;letter-spacing:0.082px;">Dataset / Schema</div>
<div class="t s" style="left:1920.50px;top:588.22px;font-size:34px;line-height:34px;color:#212121;letter-spacing:0.338px;">public</div>
<div class="a fld" style="left:2572px;top:566px;width:666px;height:80px;"></div>
<div class="t" style="left:2600.50px;top:588.22px;font-size:34px;line-height:34px;color:#7b7b7b;letter-spacing:-0.905px;">Description</div>
<svg class="a" style="left:1212px;top:690px;width:48px;height:48px;" viewBox="0 0 24 24"><path fill="#212121" d="M11 18c0 1.1-.9 2-2 2s-2-.9-2-2 .9-2 2-2 2 .9 2 2zm-2-8c-1.1 0-2 .9-2 2s.9 2 2 2 2-.9 2-2-.9-2-2-2zm0-6c-1.1 0-2 .9-2 2s.9 2 2 2 2-.9 2-2-.9-2-2-2zm6 4c1.1 0 2-.9 2-2s-.9-2-2-2-2 .9-2 2 .9 2 2 2zm0 2c-1.1 0-2 .9-2 2s.9 2 2 2 2-.9 2-2-.9-2-2-2zm0 6c-1.1 0-2 .9-2 2s.9 2 2 2 2-.9 2-2-.9-2-2-2z"/></svg>
<div class="a fld" style="left:1269px;top:676px;width:243px;height:80px;"></div>
<div class="a" style="left:1286.5px;top:676px;width:99.0px;height:3px;background:#fff"></div>
<div class="t" style="left:1297.50px;top:663.98px;font-size:24px;line-height:24px;color:#666666;letter-spacing:-0.606px;">Name *</div>
<div class="t s" style="left:1297.50px;top:698.22px;font-size:34px;line-height:34px;color:#212121;letter-spacing:-0.136px;">actor_id</div>
<div class="a fld" style="left:1552px;top:676px;width:320px;height:80px;"></div>
<div class="a" style="left:1569.5px;top:676px;width:87.0px;height:3px;background:#fff"></div>
<div class="t" style="left:1580.50px;top:663.98px;font-size:24px;line-height:24px;color:#666666;letter-spacing:-0.606px;">Type *</div>
<div class="t s" style="left:1580.50px;top:698.22px;font-size:34px;line-height:34px;color:#212121;letter-spacing:-0.247px;">serial</div>
<svg class="a" style="left:1807px;top:692px;width:48px;height:48px;" viewBox="0 0 24 24"><path fill="#757575" d="M7 10l5 5 5-5z"/></svg>
<div class="a fld" style="left:1892px;top:676px;width:193px;height:80px;"></div>
<div class="a" style="left:1909.5px;top:676px;width:121.0px;height:3px;background:#fff"></div>
<div class="t" style="left:1920.50px;top:663.98px;font-size:24px;line-height:24px;color:#666666;letter-spacing:0.037px;">Precision</div>
<div class="t s" style="left:1920.50px;top:698.22px;font-size:34px;line-height:34px;color:#212121;letter-spacing:-2.312px;">10</div>
<div class="a fld" style="left:2105px;top:676px;width:193px;height:80px;"></div>
<div class="a" style="left:2122.5px;top:676px;width:81.0px;height:3px;background:#fff"></div>
<div class="t" style="left:2133.50px;top:663.98px;font-size:24px;line-height:24px;color:#666666;letter-spacing:-0.258px;">Scale</div>
<div class="t s" style="left:2133.50px;top:698.22px;font-size:34px;line-height:34px;color:#212121;letter-spacing:0.000px;">0</div>
<div class="t" style="left:2544.80px;top:681.07px;font-size:20px;line-height:20px;color:#212121;letter-spacing:-0.242px;">NULL</div>
<div class="t" style="left:2686.85px;top:681.07px;font-size:20px;line-height:20px;color:#212121;letter-spacing:-0.387px;">PK</div>
<svg class="a" style="left:2546px;top:705px;width:48px;height:48px;" viewBox="0 0 24 24"><path fill="#757575" d="M19 5v14H5V5h14m0-2H5c-1.11 0-2 .9-2 2v14c0 1.1.89 2 2 2h14c1.1 0 2-.9 2-2V5c0-1.1-.9-2-2-2z"/></svg>
<div class="a" style="left:2684px;top:713px;width:32px;height:32px;background:#fff"></div>
<svg class="a" style="left:2676px;top:705px;width:48px;height:48px;" viewBox="0 0 24 24"><path fill="#3f51b5" d="M19 3H5c-1.11 0-2 .9-2 2v14c0 1.1.89 2 2 2h14c1.11 0 2-.9 2-2V5c0-1.1-.89-2-2-2zm-9 14l-5-5 1.41-1.41L10 14.17l7.59-7.59L19 8l-9 9z"/></svg>
<svg class="a" style="left:1212px;top:810px;width:48px;height:48px;" viewBox="0 0 24 24"><path fill="#212121" d="M11 18c0 1.1-.9 2-2 2s-2-.9-2-2 .9-2 2-2 2 .9 2 2zm-2-8c-1.1 0-2 .9-2 2s.9 2 2 2 2-.9 2-2-.9-2-2-2zm0-6c-1.1 0-2 .9-2 2s.9 2 2 2 2-.9 2-2-.9-2-2-2zm6 4c1.1 0 2-.9 2-2s-.9-2-2-2-2 .9-2 2 .9 2 2 2zm0 2c-1.1 0-2 .9-2 2s.9 2 2 2 2-.9 2-2-.9-2-2-2zm0 6c-1.1 0-2 .9-2 2s.9 2 2 2 2-.9 2-2-.9-2-2-2z"/></svg>
<div class="a fld" style="left:1269px;top:796px;width:243px;height:80px;"></div>
<div class="a" style="left:1286.5px;top:796px;width:99.0px;height:3px;background:#fff"></div>
<div class="t" style="left:1297.50px;top:783.98px;font-size:24px;line-height:24px;color:#666666;letter-spacing:-0.606px;">Name *</div>
<div class="t s" style="left:1297.50px;top:818.22px;font-size:34px;line-height:34px;color:#212121;letter-spacing:0.030px;">first_name</div>
<div class="a fld" style="left:1552px;top:796px;width:320px;height:80px;"></div>
<div class="a" style="left:1569.5px;top:796px;width:87.0px;height:3px;background:#fff"></div>
<div class="t" style="left:1580.50px;top:783.98px;font-size:24px;line-height:24px;color:#666666;letter-spacing:-0.606px;">Type *</div>
<div class="t s" style="left:1580.50px;top:818.22px;font-size:34px;line-height:34px;color:#212121;letter-spacing:0.104px;">varchar</div>
<svg class="a" style="left:1807px;top:812px;width:48px;height:48px;" viewBox="0 0 24 24"><path fill="#757575" d="M7 10l5 5 5-5z"/></svg>
<div class="a fld" style="left:1892px;top:796px;width:193px;height:80px;"></div>
<div class="a" style="left:1909.5px;top:796px;width:68.0px;height:3px;background:#fff"></div>
<div class="t" style="left:1920.50px;top:783.98px;font-size:24px;line-height:24px;color:#666666;letter-spacing:-0.229px;">Size</div>
<div class="t s" style="left:1920.50px;top:818.22px;font-size:34px;line-height:34px;color:#212121;letter-spacing:0.000px;">45</div>
<div class="t" style="left:2544.80px;top:801.07px;font-size:20px;line-height:20px;color:#212121;letter-spacing:-0.242px;">NULL</div>
<div class="t" style="left:2686.85px;top:801.07px;font-size:20px;line-height:20px;color:#212121;letter-spacing:-0.387px;">PK</div>
<svg class="a" style="left:2546px;top:825px;width:48px;height:48px;" viewBox="0 0 24 24"><path fill="#757575" d="M19 5v14H5V5h14m0-2H5c-1.11 0-2 .9-2 2v14c0 1.1.89 2 2 2h14c1.1 0 2-.9 2-2V5c0-1.1-.9-2-2-2z"/></svg>
<svg class="a" style="left:2676px;top:825px;width:48px;height:48px;" viewBox="0 0 24 24"><path fill="#757575" d="M19 5v14H5V5h14m0-2H5c-1.11 0-2 .9-2 2v14c0 1.1.89 2 2 2h14c1.1 0 2-.9 2-2V5c0-1.1-.9-2-2-2z"/></svg>
<svg class="a" style="left:1212px;top:930px;width:48px;height:48px;" viewBox="0 0 24 24"><path fill="#212121" d="M11 18c0 1.1-.9 2-2 2s-2-.9-2-2 .9-2 2-2 2 .9 2 2zm-2-8c-1.1 0-2 .9-2 2s.9 2 2 2 2-.9 2-2-.9-2-2-2zm0-6c-1.1 0-2 .9-2 2s.9 2 2 2 2-.9 2-2-.9-2-2-2zm6 4c1.1 0 2-.9 2-2s-.9-2-2-2-2 .9-2 2 .9 2 2 2zm0 2c-1.1 0-2 .9-2 2s.9 2 2 2 2-.9 2-2-.9-2-2-2zm0 6c-1.1 0-2 .9-2 2s.9 2 2 2 2-.9 2-2-.9-2-2-2z"/></svg>
<div class="a fld" style="left:1269px;top:916px;width:243px;height:80px;"></div>
<div class="a" style="left:1286.5px;top:916px;width:99.0px;height:3px;background:#fff"></div>
<div class="t" style="left:1297.50px;top:903.98px;font-size:24px;line-height:24px;color:#666666;letter-spacing:-0.606px;">Name *</div>
<div class="t s" style="left:1297.50px;top:938.22px;font-size:34px;line-height:34px;color:#212121;letter-spacing:-0.357px;">last_name</div>
<div class="a fld" style="left:1552px;top:916px;width:320px;height:80px;"></div>
<div class="a" style="left:1569.5px;top:916px;width:87.0px;height:3px;background:#fff"></div>
<div class="t" style="left:1580.50px;top:903.98px;font-size:24px;line-height:24px;color:#666666;letter-spacing:-0.606px;">Type *</div>
<div class="t s" style="left:1580.50px;top:938.22px;font-size:34px;line-height:34px;color:#212121;letter-spacing:0.104px;">varchar</div>
<svg class="a" style="left:1807px;top:932px;width:48px;height:48px;" viewBox="0 0 24 24"><path fill="#757575" d="M7 10l5 5 5-5z"/></svg>
<div class="a fld" style="left:1892px;top:916px;width:193px;height:80px;"></div>
<div class="a" style="left:1909.5px;top:916px;width:68.0px;height:3px;background:#fff"></div>
<div class="t" style="left:1920.50px;top:903.98px;font-size:24px;line-height:24px;color:#666666;letter-spacing:-0.229px;">Size</div>
<div class="t s" style="left:1920.50px;top:938.22px;font-size:34px;line-height:34px;color:#212121;letter-spacing:0.000px;">45</div>
<div class="t" style="left:2544.80px;top:921.07px;font-size:20px;line-height:20px;color:#212121;letter-spacing:-0.242px;">NULL</div>
<div class="t" style="left:2686.85px;top:921.07px;font-size:20px;line-height:20px;color:#212121;letter-spacing:-0.387px;">PK</div>
<svg class="a" style="left:2546px;top:945px;width:48px;height:48px;" viewBox="0 0 24 24"><path fill="#757575" d="M19 5v14H5V5h14m0-2H5c-1.11 0-2 .9-2 2v14c0 1.1.89 2 2 2h14c1.1 0 2-.9 2-2V5c0-1.1-.9-2-2-2z"/></svg>
<svg class="a" style="left:2676px;top:945px;width:48px;height:48px;" viewBox="0 0 24 24"><path fill="#757575" d="M19 5v14H5V5h14m0-2H5c-1.11 0-2 .9-2 2v14c0 1.1.89 2 2 2h14c1.1 0 2-.9 2-2V5c0-1.1-.9-2-2-2z"/></svg>
<svg class="a" style="left:1212px;top:1050px;width:48px;height:48px;" viewBox="0 0 24 24"><path fill="#212121" d="M11 18c0 1.1-.9 2-2 2s-2-.9-2-2 .9-2 2-2 2 .9 2 2zm-2-8c-1.1 0-2 .9-2 2s.9 2 2 2 2-.9 2-2-.9-2-2-2zm0-6c-1.1 0-2 .9-2 2s.9 2 2 2 2-.9 2-2-.9-2-2-2zm6 4c1.1 0 2-.9 2-2s-.9-2-2-2-2 .9-2 2 .9 2 2 2zm0 2c-1.1 0-2 .9-2 2s.9 2 2 2 2-.9 2-2-.9-2-2-2zm0 6c-1.1 0-2 .9-2 2s.9 2 2 2 2-.9 2-2-.9-2-2-2z"/></svg>
<div class="a fld" style="left:1269px;top:1036px;width:243px;height:80px;"></div>
<div class="a" style="left:1286.5px;top:1036px;width:99.0px;height:3px;background:#fff"></div>
<div class="t" style="left:1297.50px;top:1023.98px;font-size:24px;line-height:24px;color:#666666;letter-spacing:-0.606px;">Name *</div>
<div class="t s" style="left:1297.50px;top:1058.22px;font-size:34px;line-height:34px;color:#212121;letter-spacing:-0.030px;">last_update</div>
<div class="a fld" style="left:1552px;top:1036px;width:320px;height:80px;"></div>
<div class="a" style="left:1569.5px;top:1036px;width:87.0px;height:3px;background:#fff"></div>
<div class="t" style="left:1580.50px;top:1023.98px;font-size:24px;line-height:24px;color:#666666;letter-spacing:-0.606px;">Type *</div>
<div class="t s" style="left:1580.50px;top:1058.22px;font-size:34px;line-height:34px;color:#212121;letter-spacing:0.116px;">timesta...</div>
<svg class="a" style="left:1807px;top:1052px;width:48px;height:48px;" viewBox="0 0 24 24"><path fill="#757575" d="M7 10l5 5 5-5z"/></svg>
<div class="a fld" style="left:1892px;top:1036px;width:193px;height:80px;"></div>
<div class="t" style="left:1920.50px;top:1058.22px;font-size:34px;line-height:34px;color:#7b7b7b;letter-spacing:-1.337px;">Format</div>
<div class="a" style="left:1212px;top:1150px;width:2040px;height:260px;overflow:hidden"><div class="a" style="left:0;top:46px;width:2040px;height:160px;background:#fff;box-shadow:0 4px 8px -2px rgba(0,0,0,0.2),0 8px 10px 0 rgba(0,0,0,0.14),0 2px 20px 0 rgba(0,0,0,0.12)"></div></div>
<div class="a fld" style="left:1270px;top:1237px;width:267px;height:80px;"></div>
<div class="t" style="left:1297.50px;top:1259.22px;font-size:34px;line-height:34px;color:#7b7b7b;letter-spacing:-2.575px;">Name *</div>
<div class="a fld" style="left:1553px;top:1237px;width:324px;height:80px;"></div>
<div class="t" style="left:1580.50px;top:1259.22px;font-size:34px;line-height:34px;color:#7b7b7b;letter-spacing:-2.178px;">Type *</div>
<svg class="a" style="left:1812px;top:1253px;width:48px;height:48px;" viewBox="0 0 24 24"><path fill="#757575" d="M7 10l5 5 5-5z"/></svg>
<div class="a" style="left:2743px;top:1257px;width:206px;height:58px;border:2px solid #dedede;border-radius:8px"></div>
<div class="t" style="left:2776.00px;top:1273.99px;font-size:26px;line-height:26px;color:#bdbdbd;letter-spacing:1.701px;">ADD TEST</div>
<div class="a" style="left:2970px;top:1256px;width:128px;height:60px;background:#2c387e;border-radius:8px"></div>
<div class="a" style="left:3032px;top:1274px;width:3px;height:22px;background:#fff;"></div>
<div class="a" style="left:3022px;top:1284px;width:23px;height:3px;background:#fff;"></div>
<div class="a" style="left:2659px;top:1620px;width:421px;height:73px;background:#3f51b5;border-radius:8px;box-shadow:0 3px 1px -2px rgba(0,0,0,0.2),0 2px 2px 0 rgba(0,0,0,0.14),0 1px 5px 0 rgba(0,0,0,0.12)"></div>
<div class="a" style="left:2990px;top:1620px;width:2px;height:73px;background:#2c387e;"></div>
<div class="t" style="left:2692.50px;top:1642.45px;font-size:29px;line-height:29px;color:#fff;letter-spacing:-0.402px;">SAVE AND DEPLOY</div>
<svg class="a" style="left:3012px;top:1634px;width:48px;height:48px;" viewBox="0 0 24 24"><path fill="#fff" d="M7 10l5 5 5-5z"/></svg>
<div class="a" style="left:3110px;top:1621px;width:182px;height:71px;border:2px solid rgba(63,81,181,0.5);border-radius:8px"></div>
<div class="t" style="left:3143.00px;top:1642.45px;font-size:29px;line-height:29px;color:#3f51b5;letter-spacing:-0.525px;">CANCEL</div>
<div class="a" style="left:1130px;top:1762px;width:1060px;height:60px;border-radius:30px;background:#999;box-shadow:0 0 60px 14px rgba(0,0,0,0.22)"></div>
</body></html>
